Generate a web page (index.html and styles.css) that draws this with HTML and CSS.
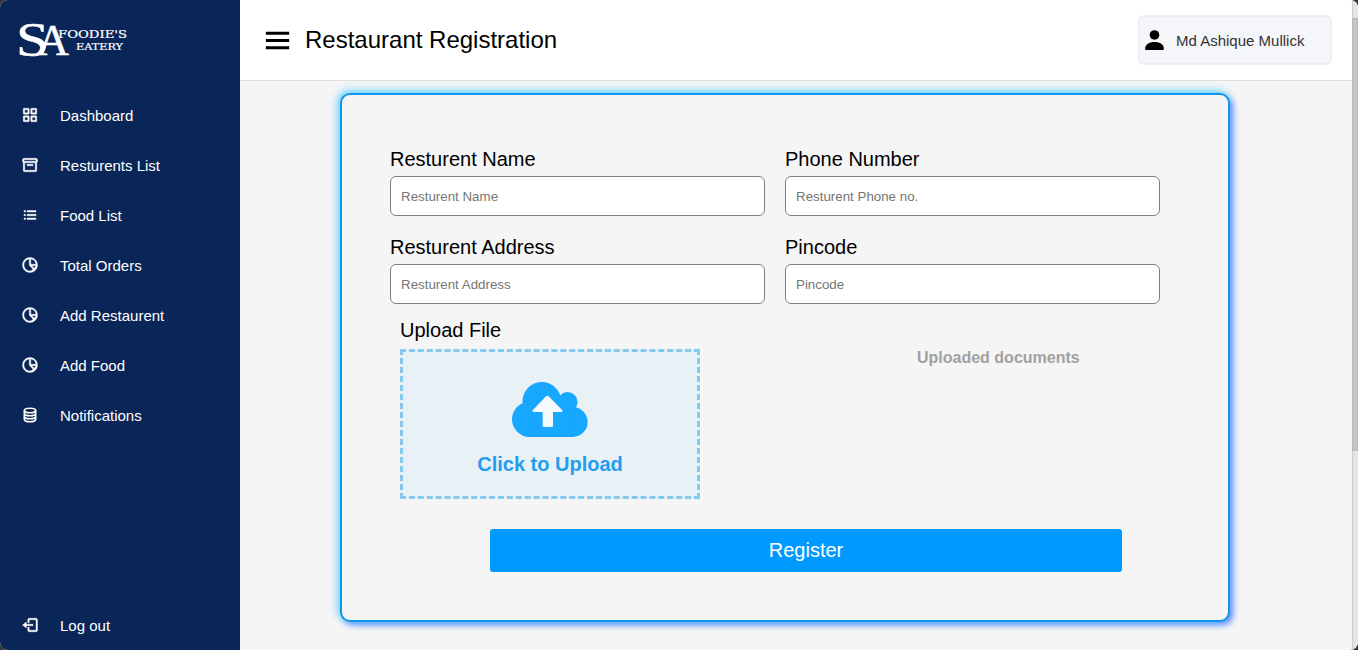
FILE: index.html
```html
<!DOCTYPE html>
<html lang="en">
<head>
<meta charset="utf-8">
<title>Restaurant Registration</title>
<link rel="stylesheet" href="styles.css">
</head>
<body>
<svg class="defs" aria-hidden="true">
  <symbol id="pie" viewBox="0 0 24 24"><path d="M12 2C6.486 2 2 6.486 2 12s4.486 10 10 10 10-4.486 10-10S17.514 2 12 2zm7.931 9H13V4.069A8.008 8.008 0 0 1 19.931 11zM4 12c0-4.072 3.061-7.436 7-7.931V12c0 .266.105.52.293.707l4.898 4.898A7.954 7.954 0 0 1 12 20c-4.411 0-8-3.589-8-8zm13.606 4.191L14.414 13h5.517a7.95 7.95 0 0 1-2.325 3.191z"/></symbol>
</svg>
<div class="app">
  <aside class="sidebar">
    <svg class="logo" viewBox="0 0 120 44" role="img">
      <text class="logo-big" x="-1" y="38.500" font-size="48" textLength="33" lengthAdjust="spacingAndGlyphs">S</text>
      <text class="logo-big logo-a" x="20" y="38" font-size="45" textLength="32" lengthAdjust="spacingAndGlyphs">A</text>
      <text class="logo-small" x="41" y="21" font-size="11" textLength="69" lengthAdjust="spacingAndGlyphs">FOODIE'S</text>
      <text class="logo-small" x="59" y="33" font-size="8.500" textLength="47" lengthAdjust="spacingAndGlyphs">EATERY</text>
    </svg>
    <nav class="menu">
      <a class="item"><svg class="icon" viewBox="0 0 24 24"><path fill-rule="evenodd" d="M4 3h6a1 1 0 0 1 1 1v6a1 1 0 0 1-1 1H4a1 1 0 0 1-1-1V4a1 1 0 0 1 1-1zm1 2v4h4V5zM14 3h6a1 1 0 0 1 1 1v6a1 1 0 0 1-1 1h-6a1 1 0 0 1-1-1V4a1 1 0 0 1 1-1zm1 2v4h4V5zM4 13h6a1 1 0 0 1 1 1v6a1 1 0 0 1-1 1H4a1 1 0 0 1-1-1v-6a1 1 0 0 1 1-1zm1 2v4h4v-4zM14 13h6a1 1 0 0 1 1 1v6a1 1 0 0 1-1 1h-6a1 1 0 0 1-1-1v-6a1 1 0 0 1 1-1zm1 2v4h4v-4z"/></svg>Dashboard</a>
      <a class="item"><svg class="icon" viewBox="0 0 24 24"><path fill-rule="evenodd" d="M4 3h16a2 2 0 0 1 2 2v2a2 2 0 0 1-1 1.720V19a2 2 0 0 1-2 2H5a2 2 0 0 1-2-2V8.720A2 2 0 0 1 2 7V5a2 2 0 0 1 2-2zm0 2v2h16V5zm1 4v10h14V9z"/><path d="M8 11h8v2H8z"/></svg>Resturents List</a>
      <a class="item"><svg class="icon" viewBox="0 0 24 24"><path d="M4 6h2v2H4zm0 5h2v2H4zm0 5h2v2H4zm16-8V6H8v2h12zM8 11h12v2H8zm0 5h12v2H8z"/></svg>Food List</a>
      <a class="item"><svg class="icon"><use href="#pie"/></svg>Total Orders</a>
      <a class="item"><svg class="icon"><use href="#pie"/></svg>Add Restaurent</a>
      <a class="item"><svg class="icon"><use href="#pie"/></svg>Add Food</a>
      <a class="item"><svg class="icon" viewBox="0 0 24 24"><g fill="none" stroke="#fff" stroke-width="2.300"><ellipse cx="12" cy="6" rx="7.500" ry="3"/><path d="M4.500 6v12c0 1.660 3.360 3 7.500 3s7.500-1.340 7.500-3V6M4.500 10c0 1.660 3.360 3 7.500 3s7.500-1.340 7.500-3M4.500 14c0 1.660 3.360 3 7.500 3s7.500-1.340 7.500-3"/></g></svg>Notifications</a>
      <a class="item logout"><svg class="icon" viewBox="0 0 24 24"><path d="m2 12 5 4v-3h9v-2H7V8z"/><path d="M20 3h-9c-1.103 0-2 .897-2 2v4h2V5h9v14h-9v-4H9v4c0 1.103.897 2 2 2h9c1.103 0 2-.897 2-2V5c0-1.103-.897-2-2-2z"/></svg>Log out</a>
    </nav>
  </aside>
  <main class="main">
    <header class="header">
      <svg class="burger" viewBox="0 0 24 24"><path d="M4 6h16v2H4zm0 5h16v2H4zm0 5h16v2H4z"/></svg>
      <h1 class="title">Restaurant Registration</h1>
      <div class="profile">
        <svg class="user" viewBox="0 0 24 24"><circle cx="12" cy="6.700" r="4.600"/><path d="M3 20.200c0-4.300 3.600-6.700 9-6.700s9 2.400 9 6.700q0 1-1 1H4q-1 0-1-1z"/></svg>
        <span>Md Ashique Mullick</span>
      </div>
    </header>
    <form class="card">
      <div class="fields">
        <label class="field">Resturent Name<input class="input" placeholder="Resturent Name"></label>
        <label class="field">Phone Number<input class="input" placeholder="Resturent Phone no."></label>
        <label class="field">Resturent Address<input class="input" placeholder="Resturent Address"></label>
        <label class="field">Pincode<input class="input" placeholder="Pincode"></label>
      </div>
      <div class="files">
        <div class="upload">
          <div class="upload-label">Upload File</div>
          <div class="drop">
            <svg class="cloud" viewBox="0 0 228 165">
              <g fill="#18a7ff">
                <circle cx="89.500" cy="58" r="58"/>
                <circle cx="166.500" cy="60" r="30"/>
                <circle cx="53" cy="112" r="53"/>
                <circle cx="182" cy="120" r="45"/>
                <path d="M53 60h113l16 20v85H53z"/>
              </g>
              <path fill="#f3f9fc" d="M102 43q4-3 8 0l41 42q3 4-2 5h-26v42q0 3-3 3H95q-3 0-3-3V90H64q-5-1-2-5z"/>
            </svg>
            <div class="drop-text">Click to Upload</div>
          </div>
        </div>
        <div class="documents">Uploaded documents</div>
      </div>
      <button class="register" type="button">Register</button>
    </form>
  </main>
  <div class="scrollbar"><div class="thumb"></div></div>
</div>
</body>
</html>
```

FILE: styles.css
```css
* { box-sizing: border-box; }
body {
  margin: 0;
  background: #343638;
  font-family: "Liberation Sans", Arial, sans-serif;
  overflow: hidden;
}
.defs { display: none; }
.app {
  display: flex;
  width: 1358px;
  height: 650px;
  border-radius: 8px;
  overflow: hidden;
  background: #f5f5f5;
}
.sidebar {
  width: 240px;
  flex: none;
  background: #0a2558;
  display: flex;
  flex-direction: column;
}
.logo {
  width: 120px;
  height: 44px;
  margin: 17px 0 29px 17px;
  flex: none;
  overflow: visible;
}
.logo text { fill: #fff; }
.logo-big {
  font-family: "Liberation Serif", serif;
  stroke: #fff;
  stroke-width: 0.5px;
}
.logo-small {
  font-family: "DejaVu Serif", serif;
  stroke: #fff;
  stroke-width: 0.2px;
}
.menu {
  flex: 1;
  display: flex;
  flex-direction: column;
}
.item {
  display: flex;
  align-items: center;
  height: 50px;
  padding-left: 21px;
  color: #fff;
  font-size: 15px;
}
.icon {
  width: 18px;
  height: 18px;
  margin-right: 21px;
  fill: #fff;
  stroke: #fff;
  stroke-width: 0.5px;
}
.logout { margin-top: auto; }
.main { flex: 1; }
.header {
  display: flex;
  align-items: center;
  height: 81px;
  padding: 0 20px;
  background: #fff;
  border-bottom: 1px solid #dedede;
}
.burger { width: 35px; height: 35px; margin-right: 10px; }
.title { margin: 0; font-size: 24px; font-weight: 400; }
.profile {
  display: flex;
  align-items: center;
  width: 194px;
  height: 50px;
  margin-left: auto;
  padding-left: 2px;
  border: 2px solid #efeef1;
  border-radius: 6px;
  background: #f5f6fa;
  color: #333;
  font-size: 15px;
}
.user { width: 25px; height: 25px; margin-right: 9px; fill: #000; }
.card {
  width: 890px;
  height: 529px;
  margin: 12px 0 0 100px;
  padding: 53px 48px 0;
  border: 2px solid #1296e9;
  border-radius: 10px;
  box-shadow: -2px -2px 8px #5dd2ff, 3px 3px 6px #5d86ff;
  background: #f5f5f5;
}
.fields {
  display: grid;
  grid-template-columns: 375px 375px;
  column-gap: 20px;
  row-gap: 20px;
}
.field { display: block; font-size: 20px; line-height: 23px; }
.input {
  display: block;
  width: 375px;
  height: 40px;
  margin-top: 5px;
  padding: 0 10px;
  border: 1px solid #808080;
  border-radius: 6px;
  background: #fff;
  font: 13.333px "Liberation Sans", Arial, sans-serif;
}
.input::placeholder { color: #757575; }
.files { display: flex; padding: 15px 0 0 10px; }
.upload { width: 300px; }
.upload-label { font-size: 20px; line-height: 23px; }
.drop {
  display: flex;
  flex-direction: column;
  align-items: center;
  height: 150px;
  margin-top: 7px;
  padding-top: 30px;
  border: 3px dashed #86c9ef;
  background: #e8f1f5;
}
.cloud { width: 76px; height: 55px; }
.drop-text {
  margin-top: 16px;
  color: #229df0;
  font-size: 20px;
  font-weight: 700;
  line-height: 23px;
}
.documents {
  margin: 30px 0 0 217px;
  color: #a1a1a1;
  font-size: 16px;
  font-weight: 700;
  line-height: 18px;
}
.register {
  display: block;
  width: 632px;
  height: 43px;
  margin: 30px 0 0 100px;
  border: 0;
  border-radius: 3px;
  background: #0099ff;
  color: #fff;
  font: 20px "Liberation Sans", Arial, sans-serif;
}
.scrollbar {
  width: 6px;
  padding-top: 18px;
  background: #e5e5e5;
  box-shadow: inset 1px 0 1px #ccc;
}
.thumb {
  height: 433px;
  background: #c6c6c6;
  box-shadow: inset 0 0 2px #999;
}
```
